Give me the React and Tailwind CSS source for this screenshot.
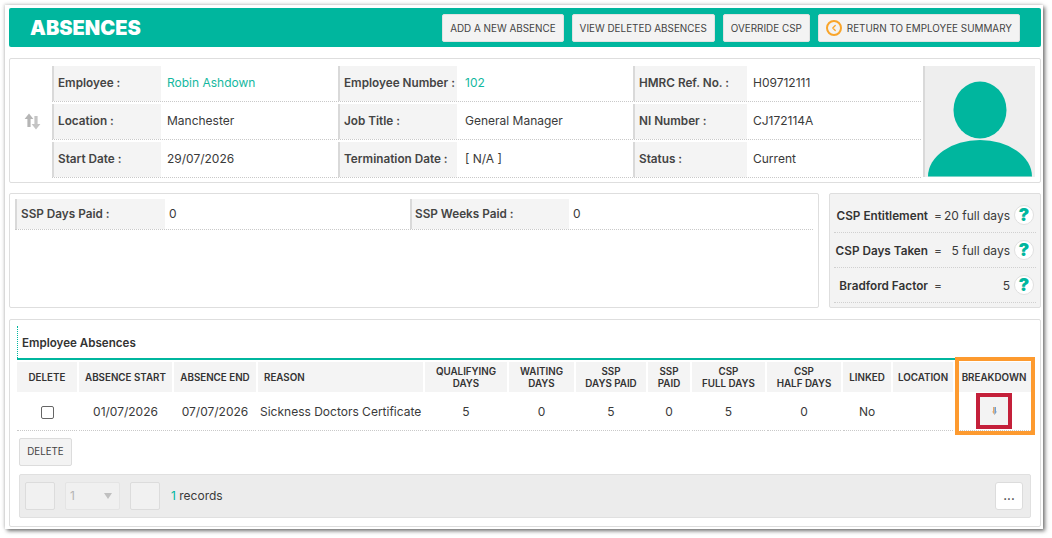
import React from "react";
import { ChevronLeft } from "lucide-react";

const employeeRows = [
  [
    ["Employee :", "Robin Ashdown", true],
    ["Employee Number :", "102", true],
    ["HMRC Ref. No. :", "H09712111"],
  ],
  [
    ["Location :", "Manchester"],
    ["Job Title :", "General Manager"],
    ["NI Number :", "CJ172114A"],
  ],
  [
    ["Start Date :", "29/07/2026"],
    ["Termination Date :", "[ N/A ]"],
    ["Status :", "Current"],
  ],
];

const columns = [
  { w: "w-[60px]", head: ["DELETE"] },
  { w: "w-[93px]", head: ["ABSENCE START"], value: "01/07/2026" },
  { w: "w-[82px]", head: ["ABSENCE END"], value: "07/07/2026" },
  { w: "w-[165px]", head: ["REASON"], value: "Sickness Doctors Certificate", left: true },
  { w: "w-[82px]", head: ["QUALIFYING", "DAYS"], value: "5" },
  { w: "w-[65px]", head: ["WAITING", "DAYS"], value: "0" },
  { w: "w-[70px]", head: ["SSP", "DAYS PAID"], value: "5" },
  { w: "w-[42px]", head: ["SSP", "PAID"], value: "0" },
  { w: "w-[73px]", head: ["CSP", "FULL DAYS"], value: "5" },
  { w: "w-[74px]", head: ["CSP", "HALF DAYS"], value: "0" },
  { w: "w-[48px]", head: ["LINKED"], value: "No" },
  { w: "w-[60px]", head: ["LOCATION"], value: "" },
  { w: "w-[78px]", head: ["BREAKDOWN"], breakdown: true },
];

const cspRows = [
  { label: "CSP Entitlement", value: "20 full days" },
  { label: "CSP Days Taken", value: "5 full days" },
  { label: "Bradford Factor", value: "5" },
];

function ToolButton({ children }) {
  return (
    <button className="h-[28px] px-[7px] pt-[1px] flex items-center gap-[5px] bg-[#f3f3f3] border border-[#e2e2e2] rounded-[2px] text-[9.9px] text-[#444] whitespace-nowrap">
      {children}
    </button>
  );
}

function PagerBox({ className }) {
  return <div className={"h-[28px] bg-[#f1f1f1] border border-[#dcdcdc] rounded-[2px] " + className} />;
}

function HelpIcon() {
  return (
    <div className="w-[20px] h-[20px] rounded-full bg-white border border-[#e0e0e0] flex items-center justify-center text-[18px] font-black text-[#00b69e] leading-none">
      ?
    </div>
  );
}

export default function App() {
  return (
    <div
      className="w-[1052px] h-[538px] bg-white overflow-hidden text-[#3a3a3a]"
      style={{ fontFamily: "Inter, 'Liberation Sans', sans-serif" }}
    >
      <div className="relative ml-[5px] mt-[5px] w-[1038px] h-[524px] bg-white pl-[4px] pr-[2px] pt-[3px] shadow-[2px_2px_4px_rgba(0,0,0,0.55),-1px_-1px_3px_rgba(0,0,0,0.15)]">
        {/* Title bar */}
        <div className="h-[39px] bg-[#00b69e] rounded-[2px] flex items-center justify-between pl-[21px] pr-[21px]">
          <h1 className="text-[20px] font-black text-white">ABSENCES</h1>
          <div className="flex gap-[8px]">
            <ToolButton>ADD A NEW ABSENCE</ToolButton>
            <ToolButton>VIEW DELETED ABSENCES</ToolButton>
            <ToolButton>OVERRIDE CSP</ToolButton>
            <ToolButton>
              <span className="w-[16px] h-[16px] rounded-full border-2 border-[#f9a52b] flex items-center justify-center">
                <ChevronLeft size={10} strokeWidth={3} className="text-[#f9a52b]" />
              </span>
              RETURN TO EMPLOYEE SUMMARY
            </ToolButton>
          </div>
        </div>

        {/* Employee details */}
        <div className="mt-[11px] h-[125px] bg-white border border-[#dedede] rounded-[2px] flex pt-[7px] pl-[14px] pr-[5px]">
          <div className="w-[28px] flex items-center justify-start">
            <svg width="17" height="17" viewBox="0 0 17 17" className="mt-[-6px]">
              <path d="M5 0.5 L9.4 6 H6.6 V14 H3.4 V6 H0.6 Z" fill="#b5b5b5" />
              <path d="M12 16.5 L16.4 11 H13.6 V3 H10.4 V11 H7.6 Z" fill="#c4c4c4" />
            </svg>
          </div>
          <div className="w-[869px] flex flex-col gap-[2px]">
            {employeeRows.map((row, i) => (
              <div key={i} className="h-[36px] flex gap-[2px] border-b border-dotted border-[#c9c9c9]">
                {row.map(([label, value, link], j) => (
                  <div key={label} className={j === 0 ? "w-[284px] flex" : j === 1 ? "w-[293px] flex" : "w-[288px] flex"}>
                    <div
                      className={
                        (j === 0 ? "w-[109px]" : j === 1 ? "w-[119px]" : "w-[114px]") +
                        " bg-[#f4f4f4] border-l-2 border-[#d9d9d9] pl-[4px] flex items-center text-[11.75px] font-semibold text-[#444] whitespace-nowrap"
                      }
                    >
                      {label}
                    </div>
                    <div
                      className={
                        (j === 1 ? "pl-[8px]" : "pl-[6px]") +
                        " pb-[1px] flex items-center text-[12px] " +
                        (link ? "text-[#14b8a0]" : "text-[#3a3a3a]")
                      }
                    >
                      {value}
                    </div>
                  </div>
                ))}
              </div>
            ))}
          </div>
          <div className="ml-[2px] w-[112px] h-[111px] bg-[#eeeeee] border-l-2 border-[#d9d9d9] flex flex-col items-center overflow-hidden">
            <svg width="110" height="111" viewBox="0 0 110 111">
              <ellipse cx="55" cy="44" rx="26.5" ry="28.5" fill="#00b69e" />
              <path d="M3 110.5 A52 36.5 0 0 1 107 110.5 Z" fill="#00b69e" />
            </svg>
          </div>
        </div>

        {/* SSP and CSP summary */}
        <div className="mt-[10px] flex gap-[10px]">
          <div className="w-[810px] h-[115px] border border-[#dedede] rounded-[2px] pt-[5px] px-[5px]">
            <div className="h-[31px] flex border-b border-dotted border-[#c9c9c9]">
              <div className="w-[395px] flex">
                <div className="w-[150px] bg-[#f4f4f4] border-l-2 border-[#d9d9d9] pl-[4px] pt-[1px] flex items-center text-[11.75px] font-semibold text-[#444]">
                  SSP Days Paid :
                </div>
                <div className="pl-[4px] flex items-center text-[12px]">0</div>
              </div>
              <div className="flex">
                <div className="w-[159px] bg-[#f4f4f4] border-l-2 border-[#d9d9d9] pl-[3px] pt-[1px] flex items-center text-[11.75px] font-semibold text-[#444]">
                  SSP Weeks Paid :
                </div>
                <div className="pl-[4px] flex items-center text-[12px]">0</div>
              </div>
            </div>
          </div>
          <div className="w-[212px] h-[115px] bg-[#f3f3f3] border border-[#dedede] rounded-[2px] pt-[4px] px-[4px]">
            {cspRows.map((row) => (
              <div key={row.label} className="h-[35px] flex items-center border-b border-dotted border-[#d0d0d0] pr-[2px]">
                <span className="w-[94px] pt-[3px] text-right text-[11.75px] font-semibold text-[#333] whitespace-nowrap">{row.label}</span>
                <span className="ml-[6px] pt-[2px] text-[12px] text-[#444]">=</span>
                <span className="ml-auto pt-[2px] text-[12px] whitespace-nowrap">{row.value}</span>
                <span className="ml-[4px]">
                  <HelpIcon />
                </span>
              </div>
            ))}
          </div>
        </div>

        {/* Absences table */}
        <div className="mt-[11px] h-[208px] border border-[#dedede] rounded-[2px] pt-[6px] px-[7px]">
          <div className="h-[32px] border-l border-dotted border-[#00b69e] pl-[4px] pt-[10px] text-[11.6px] leading-[15px] font-semibold text-[#333]">
            Employee Absences
          </div>
          <div className="h-[2px] bg-[#00b69e]" />
          <div className="mt-[2px] flex gap-[2px]">
            {columns.map((col) => (
              <div key={col.head[0] + col.head[1]} className={col.w + " shrink-0"}>
                <div className="h-[30px] pt-[1px] bg-[#f4f4f4] flex flex-col items-center justify-center text-[9.8px] leading-[12px] font-semibold text-[#333] whitespace-nowrap">
                  {col.left ? <span className="self-start pl-[6px]">{col.head[0]}</span> : col.head.map((h) => <span key={h}>{h}</span>)}
                </div>
                <div
                  className={
                    "h-[39px] flex items-center border-b border-dotted border-[#c9c9c9] text-[12px] whitespace-nowrap " +
                    (col.breakdown ? "" : "pt-[2px] ") +
                    (col.left ? "pl-[2px]" : "justify-center")
                  }
                >
                  {col.breakdown ? (
                    <button className="w-[36px] h-[36px] bg-[#f3f3f3] border-[4px] border-[#c4203a] flex items-center justify-center">
                      <svg width="5" height="8" viewBox="0 0 5 8">
                        <path d="M1 0 H2.5 V8 L0 4.5 H1 Z" fill="#e9a764" />
                        <path d="M2.5 0 H4 V4.5 H5 L2.5 8 Z" fill="#6f9fd2" />
                      </svg>
                    </button>
                  ) : col.value === undefined ? (
                    <span className="w-[13px] h-[13px] border border-[#666] rounded-[2px] bg-white" />
                  ) : (
                    col.value
                  )}
                </div>
              </div>
            ))}
          </div>
          <button className="block mt-[7px] ml-[2px] h-[28px] w-[53px] bg-[#f3f3f3] border border-[#dcdcdc] rounded-[2px] text-[9.75px] text-[#444]">
            DELETE
          </button>
          <div className="mt-[8px] ml-[2px] w-[1012px] h-[44px] bg-[#ececec] border border-[#e0e0e0] rounded-[2px] flex items-center pl-[5px] pr-[7px]">
            <PagerBox className="w-[30px]" />
            <div className="ml-[10px] w-[55px] h-[28px] bg-[#f0f0f0] border border-[#e4e4e4] rounded-[2px] flex items-center justify-between pl-[4px] pr-[7px] text-[12px] text-[#b5b5b5]">
              1
              <span className="w-0 h-0 border-l-[4px] border-r-[4px] border-t-[6px] border-l-transparent border-r-transparent border-t-[#c0c0c0]" />
            </div>
            <PagerBox className="ml-[10px] w-[30px]" />
            <div className="ml-[11px] pb-[1px] text-[12px]">
              <span className="text-[#00b69e]">1</span> records
            </div>
            <button className="ml-auto w-[28px] h-[28px] bg-white border border-[#dcdcdc] rounded-[3px] text-[12px] font-semibold text-[#444]">
              ...
            </button>
          </div>
        </div>

        {/* Annotation round the breakdown column */}
        <div className="absolute left-[950px] top-[352px] w-[80px] h-[78px] border-[4px] border-[#fd9a2f] pointer-events-none" />
      </div>
    </div>
  );
}
